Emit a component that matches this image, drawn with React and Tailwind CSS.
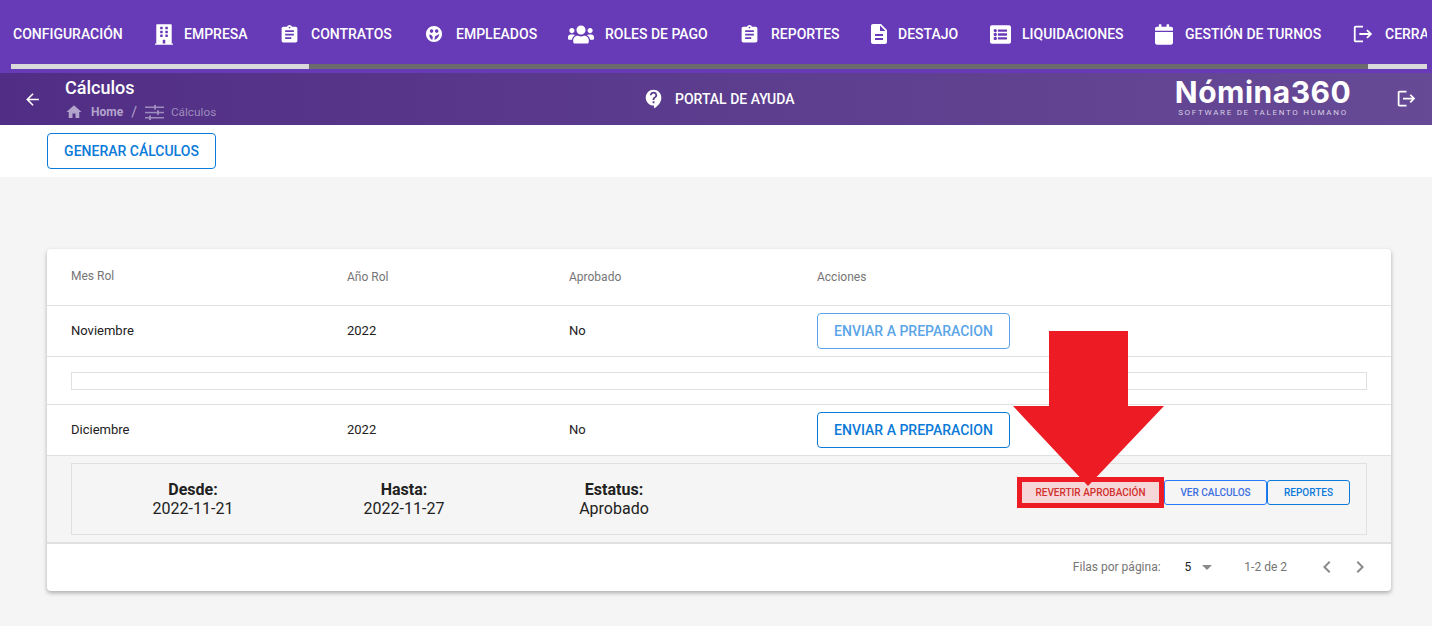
import React from "react";
import {
  MdArrowBack,
  MdArrowDropDown,
  MdAssignment,
  MdChevronLeft,
  MdChevronRight,
  MdContactSupport,
  MdDescription,
  MdHome,
  MdLogout,
} from "react-icons/md";
import { FaBuilding, FaCalendar, FaListAlt, FaUsers } from "react-icons/fa";

function FaceIcon({ className }) {
  return (
    <svg viewBox="0 0 20 20" className={className} fill="currentColor">
      <path
        fillRule="evenodd"
        d="M10 1a9 9 0 1 1 0 18a9 9 0 0 1 0-18zM7.300 4.800a2 2 0 1 0 0 4a2 2 0 0 0 0-4zM13 4.800a2 2 0 1 0 0 4a2 2 0 0 0 0-4zM4.800 10.500c-.2 2.800 1.300 5 3.200 6.100l.8-3.400l-1.800-2.200zM15.800 10l-4.500 2.600l-.9 3.700c2.700-.3 5.100-3.200 5.400-6.300z"
      />
    </svg>
  );
}

function SlidersIcon({ className }) {
  return (
    <svg viewBox="0 0 19 15" className={className} fill="currentColor">
      <rect x="0" y="1.500" width="19" height="1.500" />
      <rect x="9" y="0" width="2" height="4.500" />
      <rect x="0" y="6.800" width="19" height="1.500" />
      <rect x="12" y="5.300" width="2" height="4.500" />
      <rect x="0" y="12" width="19" height="1.500" />
      <rect x="4" y="10.500" width="2" height="4.500" />
    </svg>
  );
}

const menu = [
  { label: "CONFIGURACIÓN", width: "w-[144px] pl-[2px]" },
  { label: "EMPRESA", icon: FaBuilding, size: "h-[21px] w-[18px] mr-[11px]", width: "w-[124px]" },
  { label: "CONTRATOS", icon: MdAssignment, size: "h-[21px] w-[21px] mr-[11px]", width: "w-[146px]" },
  { label: "EMPLEADOS", icon: FaceIcon, size: "h-[18px] w-[18px] mr-[13px]", width: "w-[143px]" },
  { label: "ROLES DE PAGO", icon: FaUsers, size: "h-[21px] w-[26px] mr-[11px]", width: "w-[171px]" },
  { label: "REPORTES", icon: MdAssignment, size: "h-[21px] w-[21px] mr-[11px]", width: "w-[128px]" },
  { label: "DESTAJO", icon: MdDescription, size: "h-[24px] w-[24px] mr-[7px]", width: "w-[123px]" },
  { label: "LIQUIDACIONES", icon: FaListAlt, size: "h-[21px] w-[21px] mr-[11px]", width: "w-[165px]" },
  { label: "GESTIÓN DE TURNOS", icon: FaCalendar, size: "h-[21px] w-[18px] mr-[12px]", width: "w-[197px]" },
  { label: "CERRAR SESIÓN", icon: MdLogout, size: "h-[22px] w-[22px] mr-[11px]", width: "w-[160px]" },
];

function Row({ month, muted }) {
  return (
    <div className="grid grid-cols-[276px_222px_248px_1fr] items-center h-[51px] px-6 border-b border-[#e0e0e0] text-[13px] text-[#212121]">
      <div>{month}</div>
      <div>2022</div>
      <div>No</div>
      <div>
        <button
          className={
            muted
              ? "h-9 w-[193px] rounded border border-[#5aa5e8] text-sm font-medium text-[#5aa5e8] bg-white"
              : "h-9 w-[193px] rounded border border-[#0b7ad8] text-sm font-medium text-[#0b7ad8] bg-white"
          }
        >
          ENVIAR A PREPARACION
        </button>
      </div>
    </div>
  );
}

function Detail({ title, value, className }) {
  return (
    <div className={`text-center text-[#212121] text-base leading-[19px] whitespace-nowrap ${className}`}>
      <div className="font-bold">{title}</div>
      <div>{value}</div>
    </div>
  );
}

export default function App() {
  return (
    <div className="relative h-[626px] overflow-hidden bg-[#f5f5f5] font-['Roboto',sans-serif]">
      <nav className="h-[73px] bg-[#673ab7] pl-[11px] pr-[5px]">
        <div className="flex h-[64px] items-center overflow-hidden pt-[4px] text-white text-sm font-medium">
          {menu.map((item) => {
            const Icon = item.icon;
            return (
              <div key={item.label} className={`flex items-center shrink-0 ${item.width}`}>
                {Icon && <Icon className={`shrink-0 ${item.size}`} />}
                <span className="whitespace-nowrap">{item.label}</span>
              </div>
            );
          })}
        </div>
        <div className="flex h-[5px] bg-[#6b6b6b]">
          <div className="w-[298px] bg-[#d9d9d9]" />
          <div className="flex-1" />
          <div className="w-[59px] bg-[#d9d9d9]" />
        </div>
      </nav>

      <header className="relative flex h-[52px] items-center bg-gradient-to-r from-[#512e85] to-[#674a96] text-white">
        <MdArrowBack className="ml-[23px] h-[19px] w-[19px] shrink-0" />
        <div className="ml-[23px] w-[500px] pt-[4px]">
          <div className="-mt-[3px] text-lg font-medium leading-[21px]">Cálculos</div>
          <div className="mt-[4px] flex items-center text-xs text-[#b3a4cc] leading-[16px]">
            <MdHome className="h-[18px] w-[18px]" />
            <span className="ml-[8px] font-bold">Home</span>
            <span className="mx-[8px] text-sm">/</span>
            <SlidersIcon className="h-[15px] w-[19px] text-[#9d8cbc]" />
            <span className="ml-[7px] text-[11.8px] text-[#9d8cbc]">Cálculos</span>
          </div>
        </div>
        <div className="ml-[78px] flex items-center text-sm font-medium">
          <MdContactSupport className="h-[22px] w-[22px]" />
          <span className="ml-[10px]">PORTAL DE AYUDA</span>
        </div>
        <div className="absolute left-[1174px] top-[3px] w-[178px] text-center">
          <div className="text-[30px] font-bold leading-[32px] tracking-[0.5px] font-['Inter',sans-serif] whitespace-nowrap">
            Nómina360
          </div>
          <div className="text-[8px] leading-[10px] tracking-[1.700px] text-[#d6cfe3] whitespace-nowrap">
            SOFTWARE DE TALENTO HUMANO
          </div>
        </div>
        <MdLogout className="absolute right-[15px] top-[15px] h-[21px] w-[21px]" />
      </header>

      <div className="flex h-[52px] items-start bg-white pl-[47px] pt-[8px]">
        <button className="h-9 w-[169px] rounded border border-[#0b7ad8] text-sm font-medium text-[#0b7ad8]">
          GENERAR CÁLCULOS
        </button>
      </div>

      <main className="mx-[47px] mt-[72px] w-[1344px] rounded bg-white shadow-[0_2px_4px_rgba(0,0,0,0.3)]">
        <div className="grid grid-cols-[276px_222px_248px_1fr] items-center h-[57px] px-6 border-b border-[#e0e0e0] text-xs text-[#757575]">
          <div className="-mt-[3px]">Mes Rol</div>
          <div>Año Rol</div>
          <div>Aprobado</div>
          <div>Acciones</div>
        </div>
        <Row month="Noviembre" muted />
        <div className="flex h-[48px] items-center px-6 border-b border-[#e0e0e0]">
          <div className="h-[18px] w-full border border-[#e0e0e0]" />
        </div>
        <Row month="Diciembre" />
        <div className="h-[88px] bg-[#f5f5f5] px-6 pt-[7px] border-b-2 border-[#e0e0e0]">
          <div className="flex h-[72px] items-center border border-[#e0e0e0]">
            <Detail title="Desde:" value="2022-11-21" className="ml-[76px] w-[90px]" />
            <Detail title="Hasta:" value="2022-11-27" className="ml-[121px] w-[90px]" />
            <Detail title="Estatus:" value="Aprobado" className="ml-[120px] w-[90px]" />
            <div className="ml-auto mr-[16px] -mt-[14px] flex items-center text-[10px] font-medium">
              <button className="h-[31px] w-[147px] border-[5px] border-[#ed1c24] bg-[#f5d7d7] text-[#d32f2f]">
                REVERTIR APROBACIÓN
              </button>
              <button className="h-[25px] w-[103px] rounded-[3px] border border-[#2979ff] text-[#3d6fe0]">
                VER CALCULOS
              </button>
              <button className="h-[25px] w-[83px] rounded-[3px] border border-[#0b7ad8] text-[#0b7ad8]">
                REPORTES
              </button>
            </div>
          </div>
        </div>
        <div className="flex h-[47px] items-center justify-end pb-[2px] text-xs text-[#757575]">
          <span>Filas por página:</span>
          <span className="ml-[24px] text-[#212121]">5</span>
          <MdArrowDropDown className="ml-[4px] h-6 w-6 text-[#8a8a8a]" />
          <span className="ml-[25px]">1-2 de 2</span>
          <MdChevronLeft className="ml-[28px] h-6 w-6 text-[#8a8a8a]" />
          <MdChevronRight className="ml-[9px] mr-[19px] h-6 w-6 text-[#8a8a8a]" />
        </div>
      </main>

      {/* flecha roja de la anotacion */}
      <svg
        className="absolute left-[1013px] top-[331px] pointer-events-none"
        width="151"
        height="155"
        viewBox="0 0 151 155"
      >
        <polygon points="36,0 115,0 115,75 151,75 75,155 0,75 36,75" fill="#ed1c24" />
      </svg>
    </div>
  );
}
